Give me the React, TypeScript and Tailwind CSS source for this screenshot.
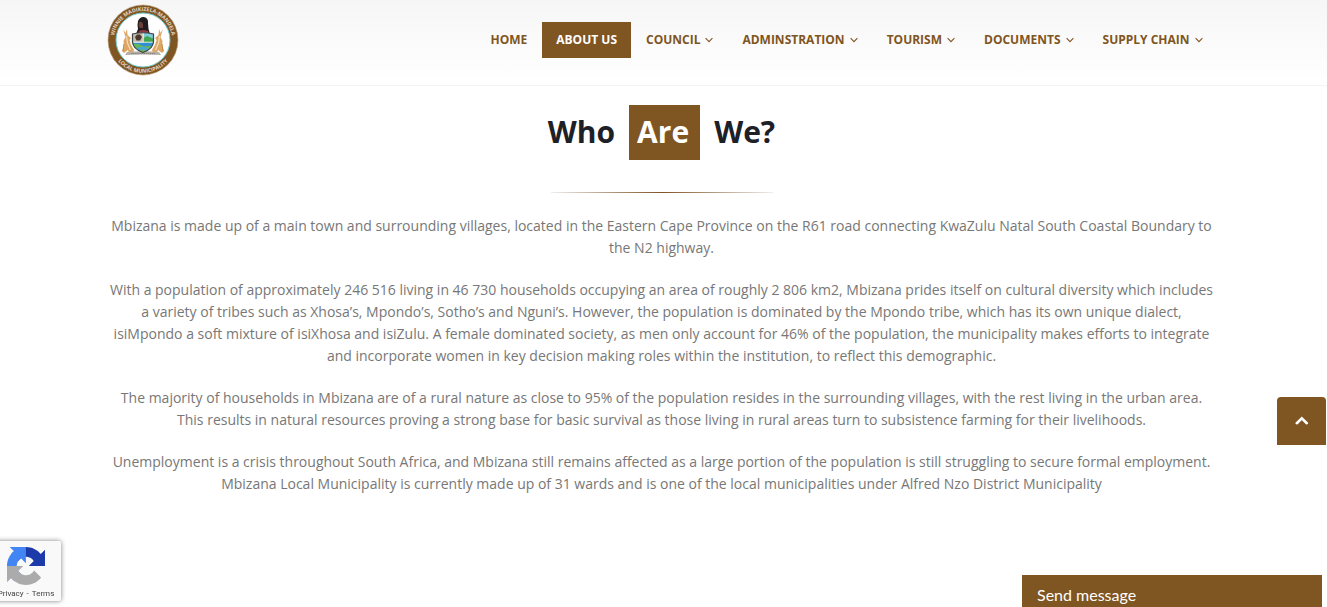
import React from "react";

type NavItem = { label: string; active?: boolean; menu?: boolean };

const navItems: NavItem[] = [
  { label: "HOME" },
  { label: "ABOUT US", active: true },
  { label: "COUNCIL", menu: true },
  { label: "ADMINSTRATION", menu: true },
  { label: "TOURISM", menu: true },
  { label: "DOCUMENTS", menu: true },
  { label: "SUPPLY CHAIN", menu: true },
];

const paragraphs = [
  "Mbizana is made up of a main town and surrounding villages, located in the Eastern Cape Province on the R61 road connecting KwaZulu Natal South Coastal Boundary to the N2 highway.",
  "With a population of approximately 246 516 living in 46 730 households occupying an area of roughly 2 806 km2, Mbizana prides itself on cultural diversity which includes a variety of tribes such as Xhosa’s, Mpondo’s, Sotho’s and Nguni’s. However, the population is dominated by the Mpondo tribe, which has its own unique dialect, isiMpondo a soft mixture of isiXhosa and isiZulu. A female dominated society, as men only account for 46% of the population, the municipality makes efforts to integrate and incorporate women in key decision making roles within the institution, to reflect this demographic.",
  "The majority of households in Mbizana are of a rural nature as close to 95% of the population resides in the surrounding villages, with the rest living in the urban area. This results in natural resources proving a strong base for basic survival as those living in rural areas turn to subsistence farming for their livelihoods.",
  "Unemployment is a crisis throughout South Africa, and Mbizana still remains affected as a large portion of the population is still struggling to secure formal employment. Mbizana Local Municipality is currently made up of 31 wards and is one of the local municipalities under Alfred Nzo District Municipality",
];

function Antelope() {
  return (
    <g>
      <path
        d="M16 25 L18.5 29 L20 25 L20.5 31 L24 34 L22.5 36 L24 41 L27 46 L26 49 L22 49 L21 46 L17 49 L15 47 L17 42 L16.5 37 L18.5 33 Z"
        fill="#dda766"
      />
      <path d="M19.5 32 L20.5 39 L23.5 46" fill="none" stroke="#f6dcb4" strokeWidth="1.2" />
      <path d="M17 40 L16 47" stroke="#c48746" strokeWidth="1" />
    </g>
  );
}

function Seal() {
  return (
    <svg viewBox="0 0 72 72" className="size-[72px]" role="img" aria-label="Winnie Madikizela-Mandela Local Municipality">
      <defs>
        <path id="seal-top" d="M6.9 36 A29.1 29.1 0 0 1 65.1 36" />
        <path id="seal-bottom" d="M3.2 36 A32.8 32.8 0 0 0 68.8 36" />
        <clipPath id="shield">
          <path d="M25.5 30 Q36 27.5 46.5 30 V38 Q46 45 36 48.5 Q26 45 25.5 38 Z" />
        </clipPath>
      </defs>
      <circle cx="36" cy="36" r="35" fill="#7f5522" stroke="#b79c7b" strokeWidth="0.6" />
      <circle cx="36" cy="36" r="27" fill="#fff" stroke="#6cc8cc" strokeWidth="1" />
      <text fontFamily="'Open Sans', sans-serif" fontSize="5.3" fontWeight="700" fill="#e6d6c2">
        <textPath href="#seal-top" startOffset="50%" textAnchor="middle">
          WINNIE MADIKIZELA-MANDELA
        </textPath>
      </text>
      <text fontFamily="'Open Sans', sans-serif" fontSize="5.3" fontWeight="700" fill="#e6d6c2">
        <textPath href="#seal-bottom" startOffset="50%" textAnchor="middle">
          LOCAL MUNICIPALITY
        </textPath>
      </text>
      <Antelope />
      <g transform="translate(72 0) scale(-1 1)">
        <Antelope />
      </g>
      <path d="M20 48 Q36 46.5 52 48 L54 51 Q36 50 18 51 Z" fill="#b5afa6" />
      <path d="M24 49.5 H48" stroke="#756e66" strokeWidth="0.7" strokeDasharray="1.4 0.7" />
      <path d="M31 17 Q33 12.5 37 13 Q41.5 14 41 19 L41.5 25 L43 30 H29 L31 25 L30.5 21 Z" fill="#211b20" />
      <path d="M32 18 Q35 17 36 20 L36 24 L33 24 L31.5 22 Z" fill="#6a4138" />
      <path d="M32 27 Q36 25 41 27 L42 30 H31 Z" fill="#933a3f" />
      <g clipPath="url(#shield)">
        <rect x="25" y="27" width="22" height="22" fill="#fff" />
        <rect x="26" y="29" width="10" height="9" fill="#c6bca9" />
        <path d="M28 33 L30 30.5 H33 L35 33 L33 36.5 H29.5 Z" fill="#4a3a2d" />
        <rect x="36.5" y="29" width="10" height="9" fill="#80c9d6" />
        <path d="M36.5 34 L40 32 L47 35 V38.5 H36.5 Z" fill="#42a650" />
        <path d="M25 38.5 H47 V44 H25 Z" fill="#2f8fd0" />
        <path d="M25 40 Q31 39 36 42 Q41 43 47 41 V49 H25 Z" fill="#64b95a" />
        <path d="M30 44 Q36 41 42 45 L40 47 Q36 44 31 47 Z" fill="#49a6d5" />
        <path d="M25 38.2 H47 M36.2 28 V38" stroke="#eef3f3" strokeWidth="0.8" />
      </g>
      <path
        d="M25.5 30 Q36 27.5 46.5 30 V38 Q46 45 36 48.5 Q26 45 25.5 38 Z"
        fill="none"
        stroke="#3a4249"
        strokeWidth="1.2"
      />
    </svg>
  );
}

function ChevronDown() {
  return (
    <svg viewBox="0 0 8 6" className="h-[6px] w-[8px]" aria-hidden="true">
      <path d="M0.6 1.2 L4 4.6 L7.4 1.2" fill="none" stroke="currentColor" strokeWidth="1.1" />
    </svg>
  );
}

function RecaptchaLogo() {
  return (
    <svg viewBox="0 0 64 64" className="size-[38px]" aria-hidden="true">
      <path
        fill="#1c3aa9"
        d="M64 31.955l-.033-1.37V4.687l-7.16 7.16C50.948 4.674 42.033.093 32.05.093c-10.4 0-19.622 4.96-25.458 12.64l11.736 11.86a15.55 15.55 0 0 1 4.754-5.334c2.05-1.6 4.952-2.906 8.968-2.906.485 0 .86.057 1.135.163 4.976.393 9.288 3.14 11.828 7.124l-8.307 8.307L64 31.953"
      />
      <path
        fill="#4285f4"
        d="M31.862.094l-1.37.033H4.594l7.16 7.16C4.58 13.147 0 22.06 0 32.046c0 10.4 4.96 19.622 12.64 25.458L24.5 45.768a15.55 15.55 0 0 1-5.334-4.754c-1.6-2.05-2.906-4.952-2.906-8.968 0-.485.057-.86.163-1.135.393-4.976 3.14-9.288 7.124-11.828l8.307 8.307L31.86.095"
      />
      <path
        fill="#ababab"
        d="M.001 32.045l.033 1.37v25.898l7.16-7.16c5.86 7.173 14.774 11.754 24.76 11.754 10.4 0 19.622-4.96 25.458-12.64l-11.736-11.86a15.55 15.55 0 0 1-4.754 5.334c-2.05 1.6-4.952 2.906-8.968 2.906-.485 0-.86-.057-1.135-.163-4.976-.393-9.288-3.14-11.828-7.124l8.307-8.307-31.297.092"
      />
    </svg>
  );
}

export default function App() {
  return (
    <div className="bg-white font-['Open_Sans',sans-serif] text-sm text-[#777]">
      <header className="border-b border-[#f4f4f4] bg-linear-to-b from-[#f6f6f6] to-white pr-1">
        <div className="mx-auto flex max-w-[1110px] items-start justify-between pt-1 pb-[9px]">
          <a href="#home">
            <Seal />
          </a>
          <nav className="mt-[18px]">
            <ul className="flex gap-px">
              {navItems.map((item) => (
                <li key={item.label}>
                  <a
                    href="#"
                    className={
                      item.active
                        ? "flex h-9 items-center bg-[#7f5522] px-[14px] text-xs font-bold whitespace-nowrap text-white"
                        : "flex h-9 items-center gap-[5px] px-[14px] text-xs font-bold whitespace-nowrap text-[#7f5522]"
                    }
                  >
                    {item.label}
                    {item.menu && <ChevronDown />}
                  </a>
                </li>
              ))}
            </ul>
          </nav>
        </div>
      </header>

      <main className="pr-1">
        <div className="mx-auto max-w-[1110px] pt-[19px] pb-16 text-center">
          <h2 className="flex items-start justify-center gap-[14px] text-[30px] leading-[53px] font-bold text-[#1d2127]">
            <span>Who</span>
            <span className="bg-[#7f5522] pr-[11px] pb-0.5 pl-2 text-white">Are</span>
            <span>We?</span>
          </h2>
          <div className="mx-auto mt-8 h-px w-[222px] bg-linear-to-r from-[#eeeeee] via-[#7f5522] to-[#eeeeee]" />
          <div className="mt-[22px] flex flex-col gap-5 leading-[22px]">
            {paragraphs.map((text) => (
              <p key={text}>{text}</p>
            ))}
          </div>
        </div>
      </main>

      <button
        type="button"
        aria-label="Back to top"
        className="fixed right-px bottom-[162px] flex h-12 w-[49px] items-center justify-center rounded-t bg-[#7f5522] text-white"
      >
        <svg viewBox="0 0 14 10" className="h-[10px] w-[14px]" aria-hidden="true">
          <path d="M1.8 7.2 L6.8 2.4 L11.8 7.2" fill="none" stroke="currentColor" strokeWidth="2.6" strokeLinecap="round" />
        </svg>
      </button>

      <aside className="fixed bottom-[6px] -left-[9px] flex h-[60px] w-[70px] flex-col items-center rounded-r-xs bg-[#f9f9f9] pt-[6px] shadow-[0_0_5px_#808080]">
        <RecaptchaLogo />
        <p className="mt-1 font-[Roboto,sans-serif] text-[8px] leading-[10px] whitespace-nowrap text-[#444]">
          <a href="#privacy">Privacy</a>
          <span className="px-[3px]">-</span>
          <a href="#terms">Terms</a>
        </p>
      </aside>

      <button
        type="button"
        className="fixed right-[5px] bottom-0 h-8 w-[300px] bg-[#7f5522] px-[15px] pt-2 text-left font-[Lato,sans-serif] text-base leading-6 text-white"
      >
        Send message
      </button>
    </div>
  );
}
